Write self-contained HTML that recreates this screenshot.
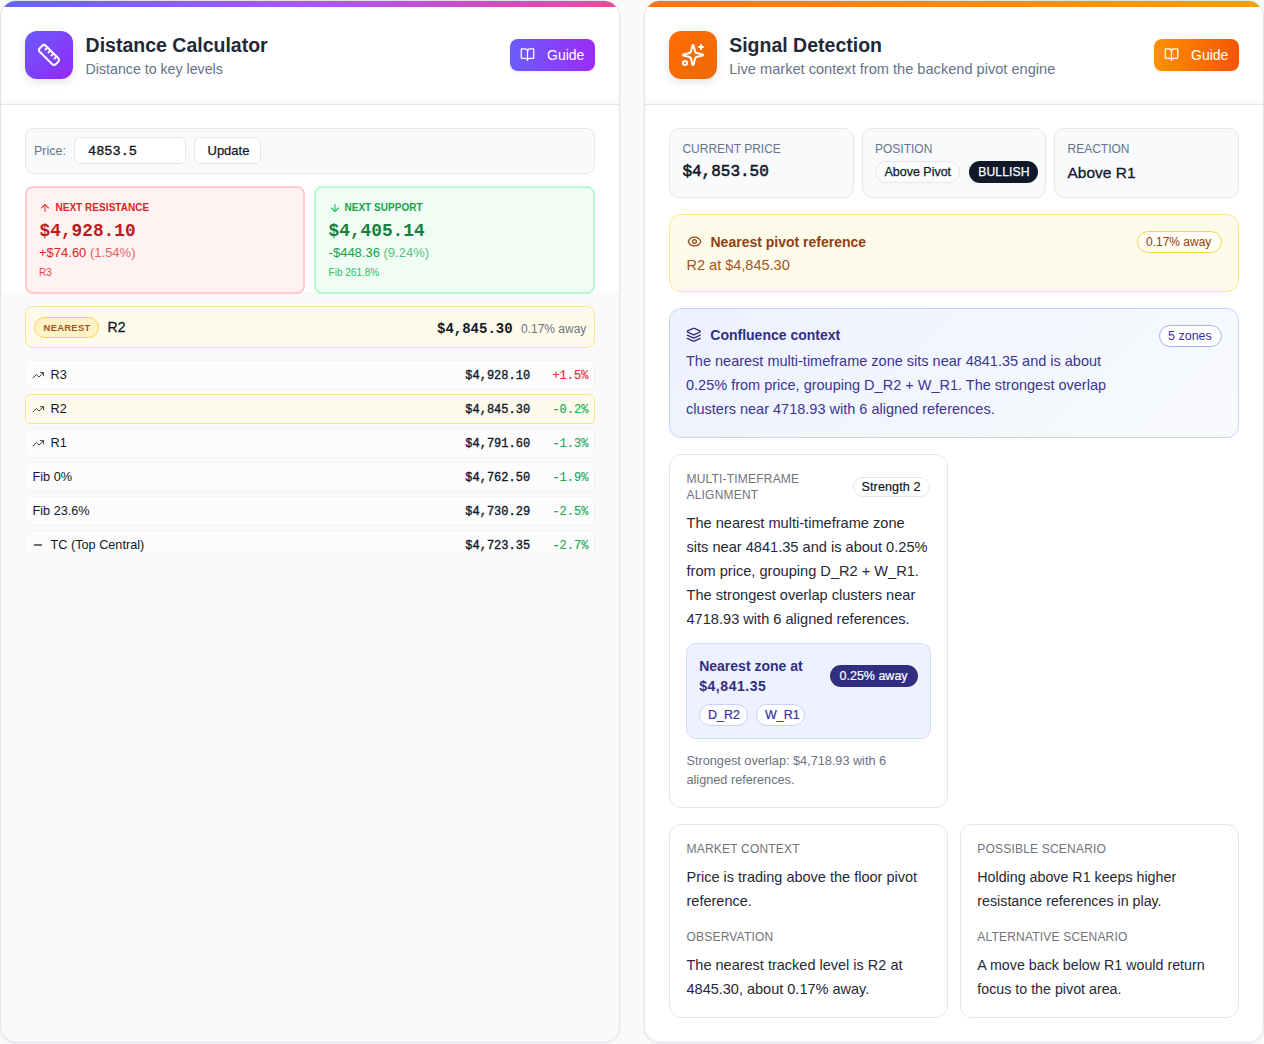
<!DOCTYPE html><html><head><meta charset="utf-8"><title>Distance Calculator &amp; Signal Detection</title><style>
html,body{margin:0;padding:0}
body{width:1264px;height:1044px;position:relative;overflow:hidden;background:#f8fafc;font-family:"Liberation Sans",sans-serif}
.t{position:absolute;white-space:nowrap;line-height:1}
.b{position:absolute}
.i{position:absolute;display:block}
.card{position:absolute;box-sizing:border-box;border:1px solid #e3e4e8;border-radius:16px;overflow:hidden;box-shadow:0 1px 3px rgba(15,23,42,.06)}
.bar{position:absolute;left:0;top:0;right:0;height:6px}
.hdr{position:absolute;left:0;top:6px;right:0;height:97px;border-bottom:1px solid #e6e8eb;background:linear-gradient(180deg,#fff 0,#fff 92px,#f8fafc 92px)}
</style></head><body><div class="card" style="left:0;top:0;width:620px;height:1043px;background:#f8fafc">
<div class="bar" style="background:linear-gradient(90deg,#6366f1,#a855f7 50%,#ec4899)"></div>
<div class="hdr"></div>
<div class="b" style="left:0;top:104px;width:620px;height:187px;background:#fff"></div>
</div>
<div class="b" style="left:25px;top:31px;width:48px;height:48px;border-radius:12px;background:linear-gradient(135deg,#6a5cff,#9328f5);box-shadow:0 3px 8px rgba(15,23,42,.12)"></div>
<svg class="i" style="left:37px;top:43px" width="24" height="24" viewBox="0 0 24 24" fill="none" stroke="#fff" stroke-width="2" stroke-linecap="round" stroke-linejoin="round"><path d="M21.3 15.3a2.4 2.4 0 0 1 0 3.4l-2.6 2.6a2.4 2.4 0 0 1-3.4 0L2.7 8.7a2.41 2.41 0 0 1 0-3.4l2.6-2.6a2.41 2.41 0 0 1 3.4 0Z"/><path d="m14.5 12.5 2-2"/><path d="m11.5 9.5 2-2"/><path d="m8.5 6.5 2-2"/><path d="m17.5 15.5 2-2"/></svg>
<div class="t" style="left:85.6px;top:36.19px;font-size:19.5px;color:#1f2937;font-weight:700;font-family:'Liberation Sans', sans-serif;letter-spacing:0px;">Distance Calculator</div>
<div class="t" style="left:85.6px;top:62.28px;font-size:14.2px;color:#64748b;font-weight:400;font-family:'Liberation Sans', sans-serif;letter-spacing:0px;">Distance to key levels</div>
<div class="b" style="left:510px;top:39px;width:85px;height:32px;border-radius:8px;background:linear-gradient(90deg,#6b5cfd,#9a2cf7);box-shadow:0 1px 3px rgba(15,23,42,.10)"></div>
<svg class="i" style="left:519.6px;top:47.3px" width="15" height="15" viewBox="0 0 24 24" fill="none" stroke="#fff" stroke-width="2" stroke-linecap="round" stroke-linejoin="round"><path d="M12 7v14"/><path d="M3 18a1 1 0 0 1-1-1V4a1 1 0 0 1 1-1h5a4 4 0 0 1 4 4 4 4 0 0 1 4-4h5a1 1 0 0 1 1 1v13a1 1 0 0 1-1 1h-6a3 3 0 0 0-3 3 3 3 0 0 0-3-3z"/></svg>
<div class="t" style="left:547px;top:48.05px;font-size:14px;color:#fff;font-weight:400;font-family:'Liberation Sans', sans-serif;letter-spacing:0px;">Guide</div>
<div class="b" style="left:25px;top:128px;width:570px;height:46px;border:1px solid #e5e7eb;border-radius:8px;background:#f8fafc;box-sizing:border-box"></div>
<div class="t" style="left:34px;top:144.82px;font-size:12.5px;color:#64748b;font-weight:400;font-family:'Liberation Sans', sans-serif;letter-spacing:0px;">Price:</div>
<div class="b" style="left:74px;top:137px;width:112px;height:27px;border:1px solid #e5e7eb;border-radius:6px;background:#fff;box-sizing:border-box"></div>
<div class="t" style="left:88px;top:145.49px;font-size:13.6px;color:#111827;font-weight:400;font-family:'Liberation Mono', monospace;letter-spacing:0px;-webkit-text-stroke:0.35px #111827">4853.5</div>
<div class="b" style="left:194px;top:137px;width:67px;height:27px;border:1px solid #e5e7eb;border-radius:6px;background:#fff;box-sizing:border-box"></div>
<div class="t" style="left:207.5px;top:144.40px;font-size:13px;color:#111827;font-weight:400;font-family:'Liberation Sans', sans-serif;letter-spacing:0px;-webkit-text-stroke:0.25px #111827">Update</div>
<div class="b" style="left:25px;top:186px;width:280px;height:108px;border:2px solid #fecaca;border-radius:8px;background:#fef2f2;box-sizing:border-box"></div>
<svg class="i" style="left:39.2px;top:202px" width="12" height="12" viewBox="0 0 24 24" fill="none" stroke="#ef4444" stroke-width="2.3" stroke-linecap="round" stroke-linejoin="round"><path d="m5 12 7-7 7 7"/><path d="M12 19V5"/></svg>
<div class="t" style="left:55.4px;top:202.53px;font-size:10px;color:#dc2626;font-weight:700;font-family:'Liberation Sans', sans-serif;letter-spacing:0.05px;">NEXT RESISTANCE</div>
<div class="t" style="left:39.6px;top:222.53px;font-size:17.8px;color:#b91c1c;font-weight:700;font-family:'Liberation Mono', monospace;letter-spacing:0px;">$4,928.10</div>
<div class="t" style="left:39px;top:246.00px;font-size:13px;color:#dc2626;font-weight:400;font-family:'Liberation Sans', sans-serif;letter-spacing:0px;">+$74.60 <span style="opacity:.7">(1.54%)</span></div>
<div class="t" style="left:39px;top:267.54px;font-size:10px;color:#ef4444;font-weight:400;font-family:'Liberation Sans', sans-serif;letter-spacing:0px;">R3</div>
<div class="b" style="left:314px;top:186px;width:281px;height:108px;border:2px solid #bbf7d0;border-radius:8px;background:#f0fdf4;box-sizing:border-box"></div>
<svg class="i" style="left:328.5px;top:202px" width="12" height="12" viewBox="0 0 24 24" fill="none" stroke="#22c55e" stroke-width="2.3" stroke-linecap="round" stroke-linejoin="round"><path d="M12 5v14"/><path d="m19 12-7 7-7-7"/></svg>
<div class="t" style="left:344.4px;top:202.53px;font-size:10px;color:#16a34a;font-weight:700;font-family:'Liberation Sans', sans-serif;letter-spacing:0.05px;">NEXT SUPPORT</div>
<div class="t" style="left:328.6px;top:222.53px;font-size:17.8px;color:#15803d;font-weight:700;font-family:'Liberation Mono', monospace;letter-spacing:0px;">$4,405.14</div>
<div class="t" style="left:328.6px;top:246.00px;font-size:13px;color:#16a34a;font-weight:400;font-family:'Liberation Sans', sans-serif;letter-spacing:0px;">-$448.36 <span style="opacity:.7">(9.24%)</span></div>
<div class="t" style="left:328.6px;top:267.54px;font-size:10px;color:#22c55e;font-weight:400;font-family:'Liberation Sans', sans-serif;letter-spacing:0px;">Fib 261.8%</div>
<div class="b" style="left:25px;top:306px;width:570px;height:42px;border:1px solid #fde68a;border-radius:8px;background:#fffbeb;box-sizing:border-box"></div>
<div class="b" style="left:34px;top:317px;width:65px;height:21px;border:1px solid #fcd34d;border-radius:999px;background:#fef3c7;box-sizing:border-box"></div>
<div class="t" style="left:43.6px;top:323.04px;font-size:9.4px;color:#a0541f;font-weight:700;font-family:'Liberation Sans', sans-serif;letter-spacing:0.3px;">NEAREST</div>
<div class="t" style="left:107.6px;top:320.45px;font-size:14px;color:#111827;font-weight:400;font-family:'Liberation Sans', sans-serif;letter-spacing:0px;-webkit-text-stroke:0.3px #111827">R2</div>
<div class="t" style="left:437px;top:321.65px;font-size:14px;color:#111827;font-weight:700;font-family:'Liberation Mono', monospace;letter-spacing:0px;">$4,845.30</div>
<div class="t" style="left:521px;top:323.14px;font-size:12px;color:#6b7280;font-weight:400;font-family:'Liberation Sans', sans-serif;letter-spacing:0px;">0.17% away</div>
<div class="b" style="left:25px;top:360px;width:570px;height:192px;overflow:hidden">
<div class="b" style="left:0;top:0px;width:570px;height:30px;border-radius:5px;box-sizing:border-box;border:1px solid #f1f5f9;background:#fcfcfd"></div>
<svg class="i" style="left:7px;top:9px" width="12.5" height="12.5" viewBox="0 0 24 24" fill="none" stroke="#3b3f46" stroke-width="1.9" stroke-linecap="round" stroke-linejoin="round"><polyline points="22 7 13.5 15.5 8.5 10.5 2 17"/><polyline points="16 7 22 7 22 13"/></svg>
<div class="t" style="left:25.5px;top:9.25px;font-size:12.7px;color:#111827;font-weight:400;font-family:'Liberation Sans', sans-serif;letter-spacing:0px;">R3</div>
<div class="t" style="left:440.3px;top:9.84px;font-size:12px;color:#111827;font-weight:400;font-family:'Liberation Mono', monospace;letter-spacing:0px;-webkit-text-stroke:0.35px #111827">$4,928.10</div>
<div class="t" style="left:527.4px;top:9.84px;font-size:12px;color:#e5282f;font-weight:400;font-family:'Liberation Mono', monospace;letter-spacing:0px;-webkit-text-stroke:0.12px #e5282f">+1.5%</div>
<div class="b" style="left:0;top:34px;width:570px;height:30px;border-radius:5px;box-sizing:border-box;border:1px solid #fde68a;background:#fffbeb"></div>
<svg class="i" style="left:7px;top:43px" width="12.5" height="12.5" viewBox="0 0 24 24" fill="none" stroke="#3b3f46" stroke-width="1.9" stroke-linecap="round" stroke-linejoin="round"><polyline points="22 7 13.5 15.5 8.5 10.5 2 17"/><polyline points="16 7 22 7 22 13"/></svg>
<div class="t" style="left:25.5px;top:43.25px;font-size:12.7px;color:#111827;font-weight:400;font-family:'Liberation Sans', sans-serif;letter-spacing:0px;">R2</div>
<div class="t" style="left:440.3px;top:43.84px;font-size:12px;color:#111827;font-weight:400;font-family:'Liberation Mono', monospace;letter-spacing:0px;-webkit-text-stroke:0.35px #111827">$4,845.30</div>
<div class="t" style="left:527.4px;top:43.84px;font-size:12px;color:#19a853;font-weight:400;font-family:'Liberation Mono', monospace;letter-spacing:0px;-webkit-text-stroke:0.12px #19a853">-0.2%</div>
<div class="b" style="left:0;top:68px;width:570px;height:30px;border-radius:5px;box-sizing:border-box;border:1px solid #f1f5f9;background:#fcfcfd"></div>
<svg class="i" style="left:7px;top:77px" width="12.5" height="12.5" viewBox="0 0 24 24" fill="none" stroke="#3b3f46" stroke-width="1.9" stroke-linecap="round" stroke-linejoin="round"><polyline points="22 7 13.5 15.5 8.5 10.5 2 17"/><polyline points="16 7 22 7 22 13"/></svg>
<div class="t" style="left:25.5px;top:77.25px;font-size:12.7px;color:#111827;font-weight:400;font-family:'Liberation Sans', sans-serif;letter-spacing:0px;">R1</div>
<div class="t" style="left:440.3px;top:77.84px;font-size:12px;color:#111827;font-weight:400;font-family:'Liberation Mono', monospace;letter-spacing:0px;-webkit-text-stroke:0.35px #111827">$4,791.60</div>
<div class="t" style="left:527.4px;top:77.84px;font-size:12px;color:#19a853;font-weight:400;font-family:'Liberation Mono', monospace;letter-spacing:0px;-webkit-text-stroke:0.12px #19a853">-1.3%</div>
<div class="b" style="left:0;top:102px;width:570px;height:30px;border-radius:5px;box-sizing:border-box;border:1px solid #f1f5f9;background:#fcfcfd"></div>
<div class="t" style="left:7.5px;top:111.25px;font-size:12.7px;color:#111827;font-weight:400;font-family:'Liberation Sans', sans-serif;letter-spacing:0px;">Fib 0%</div>
<div class="t" style="left:440.3px;top:111.84px;font-size:12px;color:#111827;font-weight:400;font-family:'Liberation Mono', monospace;letter-spacing:0px;-webkit-text-stroke:0.35px #111827">$4,762.50</div>
<div class="t" style="left:527.4px;top:111.84px;font-size:12px;color:#19a853;font-weight:400;font-family:'Liberation Mono', monospace;letter-spacing:0px;-webkit-text-stroke:0.12px #19a853">-1.9%</div>
<div class="b" style="left:0;top:136px;width:570px;height:30px;border-radius:5px;box-sizing:border-box;border:1px solid #f1f5f9;background:#fcfcfd"></div>
<div class="t" style="left:7.5px;top:145.25px;font-size:12.7px;color:#111827;font-weight:400;font-family:'Liberation Sans', sans-serif;letter-spacing:0px;">Fib 23.6%</div>
<div class="t" style="left:440.3px;top:145.84px;font-size:12px;color:#111827;font-weight:400;font-family:'Liberation Mono', monospace;letter-spacing:0px;-webkit-text-stroke:0.35px #111827">$4,730.29</div>
<div class="t" style="left:527.4px;top:145.84px;font-size:12px;color:#19a853;font-weight:400;font-family:'Liberation Mono', monospace;letter-spacing:0px;-webkit-text-stroke:0.12px #19a853">-2.5%</div>
<div class="b" style="left:0;top:170px;width:570px;height:30px;border-radius:5px;box-sizing:border-box;border:1px solid #f1f5f9;background:#fcfcfd"></div>
<div class="b" style="left:9px;top:184px;width:8px;height:2px;background:#6b6e73"></div>
<div class="t" style="left:25.5px;top:179.25px;font-size:12.7px;color:#111827;font-weight:400;font-family:'Liberation Sans', sans-serif;letter-spacing:0px;">TC (Top Central)</div>
<div class="t" style="left:440.3px;top:179.84px;font-size:12px;color:#111827;font-weight:400;font-family:'Liberation Mono', monospace;letter-spacing:0px;-webkit-text-stroke:0.35px #111827">$4,723.35</div>
<div class="t" style="left:527.4px;top:179.84px;font-size:12px;color:#19a853;font-weight:400;font-family:'Liberation Mono', monospace;letter-spacing:0px;-webkit-text-stroke:0.12px #19a853">-2.7%</div>
</div>
<div class="card" style="left:644px;top:0;width:620px;height:1043px;background:#fff">
<div class="bar" style="background:linear-gradient(90deg,#f97316,#f59e0b)"></div>
<div class="hdr"></div>
</div>
<div class="b" style="left:669px;top:31px;width:48px;height:48px;border-radius:12px;background:linear-gradient(135deg,#ff6d00,#ec6a08);box-shadow:0 3px 8px rgba(15,23,42,.12)"></div>
<svg class="i" style="left:681px;top:43px" width="24" height="24" viewBox="0 0 24 24" fill="none" stroke="#fff" stroke-width="2" stroke-linecap="round" stroke-linejoin="round"><path d="M9.937 15.5A2 2 0 0 0 8.5 14.063l-6.135-1.582a.5.5 0 0 1 0-.962L8.5 9.936A2 2 0 0 0 9.937 8.5l1.582-6.135a.5.5 0 0 1 .963 0L14.063 8.5A2 2 0 0 0 15.5 9.937l6.135 1.581a.5.5 0 0 1 0 .964L15.5 14.063a2 2 0 0 0-1.437 1.437l-1.582 6.135a.5.5 0 0 1-.963 0z"/><path d="M20 2v4"/><path d="M22 4h-4"/><circle cx="4" cy="20" r="2"/></svg>
<div class="t" style="left:729.2px;top:36.19px;font-size:19.5px;color:#1f2937;font-weight:700;font-family:'Liberation Sans', sans-serif;letter-spacing:0px;">Signal Detection</div>
<div class="t" style="left:729.2px;top:61.94px;font-size:14.6px;color:#64748b;font-weight:400;font-family:'Liberation Sans', sans-serif;letter-spacing:0px;">Live market context from the backend pivot engine</div>
<div class="b" style="left:1154px;top:39px;width:85px;height:32px;border-radius:8px;background:linear-gradient(90deg,#ff9000,#f45505);box-shadow:0 1px 3px rgba(15,23,42,.10)"></div>
<svg class="i" style="left:1163.6px;top:47.3px" width="15" height="15" viewBox="0 0 24 24" fill="none" stroke="#fff" stroke-width="2" stroke-linecap="round" stroke-linejoin="round"><path d="M12 7v14"/><path d="M3 18a1 1 0 0 1-1-1V4a1 1 0 0 1 1-1h5a4 4 0 0 1 4 4 4 4 0 0 1 4-4h5a1 1 0 0 1 1 1v13a1 1 0 0 1-1 1h-6a3 3 0 0 0-3 3 3 3 0 0 0-3-3z"/></svg>
<div class="t" style="left:1191px;top:48.05px;font-size:14px;color:#fff;font-weight:400;font-family:'Liberation Sans', sans-serif;letter-spacing:0px;">Guide</div>
<div class="b" style="left:669px;top:128px;width:185px;height:70px;border:1px solid #e5e7eb;border-radius:10px;background:#f8fafc;box-sizing:border-box"></div>
<div class="b" style="left:862px;top:128px;width:184px;height:70px;border:1px solid #e5e7eb;border-radius:10px;background:#f8fafc;box-sizing:border-box"></div>
<div class="b" style="left:1054px;top:128px;width:185px;height:70px;border:1px solid #e5e7eb;border-radius:10px;background:#f8fafc;box-sizing:border-box"></div>
<div class="t" style="left:682.4px;top:143.04px;font-size:12px;color:#64748b;font-weight:400;font-family:'Liberation Sans', sans-serif;letter-spacing:0px;">CURRENT PRICE</div>
<div class="t" style="left:682.4px;top:164.36px;font-size:16px;color:#111827;font-weight:400;font-family:'Liberation Mono', monospace;letter-spacing:0px;-webkit-text-stroke:0.55px #111827">$4,853.50</div>
<div class="t" style="left:875px;top:143.04px;font-size:12px;color:#64748b;font-weight:400;font-family:'Liberation Sans', sans-serif;letter-spacing:0px;">POSITION</div>
<div class="b" style="left:875px;top:161px;width:85px;height:22px;border:1px solid #e5e7eb;border-radius:999px;background:#fafbfc;box-sizing:border-box"></div>
<div class="t" style="left:884.4px;top:165.72px;font-size:12.5px;color:#111827;font-weight:400;font-family:'Liberation Sans', sans-serif;letter-spacing:0px;-webkit-text-stroke:0.25px #111827">Above Pivot</div>
<div class="b" style="left:969px;top:161px;width:69px;height:22px;border-radius:999px;background:#111827"></div>
<div class="t" style="left:978.2px;top:165.97px;font-size:12.2px;color:#fff;font-weight:400;font-family:'Liberation Sans', sans-serif;letter-spacing:0.1px;-webkit-text-stroke:0.25px #fff">BULLISH</div>
<div class="t" style="left:1067.5px;top:143.04px;font-size:12px;color:#64748b;font-weight:400;font-family:'Liberation Sans', sans-serif;letter-spacing:0px;">REACTION</div>
<div class="t" style="left:1067.5px;top:165.38px;font-size:15.5px;color:#111827;font-weight:400;font-family:'Liberation Sans', sans-serif;letter-spacing:0px;-webkit-text-stroke:0.3px #111827">Above R1</div>
<div class="b" style="left:669px;top:214px;width:570px;height:78px;border:1px solid #fde68a;border-radius:12px;background:#fffbeb;box-sizing:border-box"></div>
<svg class="i" style="left:686.5px;top:234px" width="15" height="15" viewBox="0 0 24 24" fill="none" stroke="#92400e" stroke-width="2" stroke-linecap="round" stroke-linejoin="round"><path d="M2.062 12.348a1 1 0 0 1 0-.696 10.75 10.75 0 0 1 19.876 0 1 1 0 0 1 0 .696 10.75 10.75 0 0 1-19.876 0"/><circle cx="12" cy="12" r="3"/></svg>
<div class="t" style="left:710.5px;top:234.65px;font-size:14px;color:#92400e;font-weight:700;font-family:'Liberation Sans', sans-serif;letter-spacing:0px;">Nearest pivot reference</div>
<div class="t" style="left:686.5px;top:257.63px;font-size:14.5px;color:#a4531a;font-weight:400;font-family:'Liberation Sans', sans-serif;letter-spacing:0px;">R2 at $4,845.30</div>
<div class="b" style="left:1137px;top:231px;width:85px;height:22px;border:1px solid #fcd34d;border-radius:999px;background:#fffdf4;box-sizing:border-box"></div>
<div class="t" style="left:1146px;top:236.34px;font-size:12px;color:#92400e;font-weight:400;font-family:'Liberation Sans', sans-serif;letter-spacing:0px;">0.17% away</div>
<div class="b" style="left:669px;top:308px;width:570px;height:130px;border:1px solid #c7d2fe;border-radius:12px;background:linear-gradient(135deg,#eef2ff,#f8fafc);box-sizing:border-box"></div>
<svg class="i" style="left:686px;top:327.2px" width="15.5" height="15.5" viewBox="0 0 24 24" fill="none" stroke="#312e81" stroke-width="2" stroke-linecap="round" stroke-linejoin="round"><path d="m12.83 2.18a2 2 0 0 0-1.66 0L2.6 6.08a1 1 0 0 0 0 1.83l8.58 3.91a2 2 0 0 0 1.66 0l8.58-3.9a1 1 0 0 0 0-1.83Z"/><path d="m22 17.65-9.17 4.16a2 2 0 0 1-1.66 0L2 17.65"/><path d="m22 12.65-9.17 4.16a2 2 0 0 1-1.66 0L2 12.65"/></svg>
<div class="t" style="left:710.3px;top:328.15px;font-size:14px;color:#312e81;font-weight:700;font-family:'Liberation Sans', sans-serif;letter-spacing:0px;">Confluence context</div>
<div class="b" style="left:1159px;top:325px;width:63px;height:22px;border:1px solid #a5b4fc;border-radius:999px;background:#fff;box-sizing:border-box"></div>
<div class="t" style="left:1168px;top:329.92px;font-size:12.5px;color:#3730a3;font-weight:400;font-family:'Liberation Sans', sans-serif;letter-spacing:0px;">5 zones</div>
<div class="t" style="left:686px;top:353.73px;font-size:14.5px;color:#3b3591;font-weight:400;font-family:'Liberation Sans', sans-serif;letter-spacing:0px;">The nearest multi-timeframe zone sits near 4841.35 and is about</div>
<div class="t" style="left:686px;top:377.73px;font-size:14.5px;color:#3b3591;font-weight:400;font-family:'Liberation Sans', sans-serif;letter-spacing:0px;">0.25% from price, grouping D_R2 + W_R1. The strongest overlap</div>
<div class="t" style="left:686px;top:401.73px;font-size:14.5px;color:#3b3591;font-weight:400;font-family:'Liberation Sans', sans-serif;letter-spacing:0px;">clusters near 4718.93 with 6 aligned references.</div>
<div class="b" style="left:669px;top:454px;width:279px;height:354px;border:1px solid #e5e7eb;border-radius:12px;background:#fff;box-sizing:border-box"></div>
<div class="t" style="left:686.5px;top:473.34px;font-size:12px;color:#717379;font-weight:400;font-family:'Liberation Sans', sans-serif;letter-spacing:0.2px;">MULTI-TIMEFRAME</div>
<div class="t" style="left:686.5px;top:488.84px;font-size:12px;color:#717379;font-weight:400;font-family:'Liberation Sans', sans-serif;letter-spacing:0.2px;">ALIGNMENT</div>
<div class="b" style="left:853px;top:477px;width:77px;height:20px;border:1px solid #e5e7eb;border-radius:999px;background:#fff;box-sizing:border-box"></div>
<div class="t" style="left:861.5px;top:480.83px;font-size:12.6px;color:#111827;font-weight:400;font-family:'Liberation Sans', sans-serif;letter-spacing:0.1px;-webkit-text-stroke:0.2px #111827">Strength 2</div>
<div class="t" style="left:686.5px;top:515.64px;font-size:14.6px;color:#1f2937;font-weight:400;font-family:'Liberation Sans', sans-serif;letter-spacing:0px;">The nearest multi-timeframe zone</div>
<div class="t" style="left:686.5px;top:539.64px;font-size:14.6px;color:#1f2937;font-weight:400;font-family:'Liberation Sans', sans-serif;letter-spacing:0px;">sits near 4841.35 and is about 0.25%</div>
<div class="t" style="left:686.5px;top:563.64px;font-size:14.6px;color:#1f2937;font-weight:400;font-family:'Liberation Sans', sans-serif;letter-spacing:0px;">from price, grouping D_R2 + W_R1.</div>
<div class="t" style="left:686.5px;top:587.64px;font-size:14.6px;color:#1f2937;font-weight:400;font-family:'Liberation Sans', sans-serif;letter-spacing:0px;">The strongest overlap clusters near</div>
<div class="t" style="left:686.5px;top:611.64px;font-size:14.6px;color:#1f2937;font-weight:400;font-family:'Liberation Sans', sans-serif;letter-spacing:0px;">4718.93 with 6 aligned references.</div>
<div class="b" style="left:686px;top:643px;width:245px;height:96px;border:1px solid #d6dcfc;border-radius:10px;background:#eef1fe;box-sizing:border-box"></div>
<div class="t" style="left:699.2px;top:658.75px;font-size:14px;color:#312e81;font-weight:700;font-family:'Liberation Sans', sans-serif;letter-spacing:0px;">Nearest zone at</div>
<div class="t" style="left:699.2px;top:679.35px;font-size:14px;color:#312e81;font-weight:700;font-family:'Liberation Sans', sans-serif;letter-spacing:0.55px;">$4,841.35</div>
<div class="b" style="left:830px;top:665px;width:88px;height:22px;border-radius:999px;background:#312e81"></div>
<div class="t" style="left:839.5px;top:669.92px;font-size:12.5px;color:#fff;font-weight:400;font-family:'Liberation Sans', sans-serif;letter-spacing:0px;-webkit-text-stroke:0.2px #fff">0.25% away</div>
<div class="b" style="left:699px;top:704px;width:49px;height:22px;border:1px solid #c7d2fe;border-radius:999px;background:#fff;box-sizing:border-box"></div>
<div class="t" style="left:708px;top:708.92px;font-size:12.5px;color:#3730a3;font-weight:400;font-family:'Liberation Sans', sans-serif;letter-spacing:0px;-webkit-text-stroke:0.2px #3730a3">D_R2</div>
<div class="b" style="left:756px;top:704px;width:49px;height:22px;border:1px solid #c7d2fe;border-radius:999px;background:#fff;box-sizing:border-box"></div>
<div class="t" style="left:765px;top:708.92px;font-size:12.5px;color:#3730a3;font-weight:400;font-family:'Liberation Sans', sans-serif;letter-spacing:0px;-webkit-text-stroke:0.2px #3730a3">W_R1</div>
<div class="t" style="left:686.5px;top:754.55px;font-size:12.7px;color:#6b7280;font-weight:400;font-family:'Liberation Sans', sans-serif;letter-spacing:0px;">Strongest overlap: $4,718.93 with 6</div>
<div class="t" style="left:686.5px;top:774.05px;font-size:12.7px;color:#6b7280;font-weight:400;font-family:'Liberation Sans', sans-serif;letter-spacing:0px;">aligned references.</div>
<div class="b" style="left:669px;top:824px;width:279px;height:194px;border:1px solid #e5e7eb;border-radius:12px;background:#fff;box-sizing:border-box"></div>
<div class="b" style="left:960px;top:824px;width:279px;height:194px;border:1px solid #e5e7eb;border-radius:12px;background:#fff;box-sizing:border-box"></div>
<div class="t" style="left:686.5px;top:843.04px;font-size:12px;color:#717379;font-weight:400;font-family:'Liberation Sans', sans-serif;letter-spacing:0.2px;">MARKET CONTEXT</div>
<div class="t" style="left:686.5px;top:869.93px;font-size:14.5px;color:#1f2937;font-weight:400;font-family:'Liberation Sans', sans-serif;letter-spacing:0px;">Price is trading above the floor pivot</div>
<div class="t" style="left:686.5px;top:893.93px;font-size:14.5px;color:#1f2937;font-weight:400;font-family:'Liberation Sans', sans-serif;letter-spacing:0px;">reference.</div>
<div class="t" style="left:686.5px;top:930.84px;font-size:12px;color:#717379;font-weight:400;font-family:'Liberation Sans', sans-serif;letter-spacing:0.2px;">OBSERVATION</div>
<div class="t" style="left:686.5px;top:957.73px;font-size:14.5px;color:#1f2937;font-weight:400;font-family:'Liberation Sans', sans-serif;letter-spacing:0px;">The nearest tracked level is R2 at</div>
<div class="t" style="left:686.5px;top:981.73px;font-size:14.5px;color:#1f2937;font-weight:400;font-family:'Liberation Sans', sans-serif;letter-spacing:0px;">4845.30, about 0.17% away.</div>
<div class="t" style="left:977.3px;top:843.04px;font-size:12px;color:#717379;font-weight:400;font-family:'Liberation Sans', sans-serif;letter-spacing:0.2px;">POSSIBLE SCENARIO</div>
<div class="t" style="left:977.3px;top:870.14px;font-size:14.25px;color:#1f2937;font-weight:400;font-family:'Liberation Sans', sans-serif;letter-spacing:0px;">Holding above R1 keeps higher</div>
<div class="t" style="left:977.3px;top:894.14px;font-size:14.25px;color:#1f2937;font-weight:400;font-family:'Liberation Sans', sans-serif;letter-spacing:0px;">resistance references in play.</div>
<div class="t" style="left:977.3px;top:930.84px;font-size:12px;color:#717379;font-weight:400;font-family:'Liberation Sans', sans-serif;letter-spacing:0.2px;">ALTERNATIVE SCENARIO</div>
<div class="t" style="left:977.3px;top:957.94px;font-size:14.25px;color:#1f2937;font-weight:400;font-family:'Liberation Sans', sans-serif;letter-spacing:0px;">A move back below R1 would return</div>
<div class="t" style="left:977.3px;top:981.94px;font-size:14.25px;color:#1f2937;font-weight:400;font-family:'Liberation Sans', sans-serif;letter-spacing:0px;">focus to the pivot area.</div></body></html>
